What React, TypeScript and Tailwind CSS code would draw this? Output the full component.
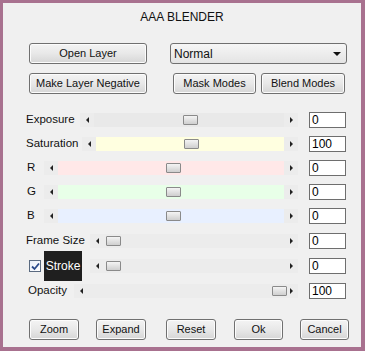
import React from 'react'

const font = { fontFamily: '"Liberation Sans", Arial, sans-serif' }

const Btn = ({ label, className }: { label: string; className: string }) => (
    <div
        className={`flex items-center justify-center h-[21px] rounded-[3px] border border-[#707070] bg-gradient-to-b from-[#f4f4f4] via-[#e8e8e8] to-[#d6d6d6] text-[11px] text-[#111] shadow-[inset_0_0_0_1px_#fcfcfc] ${className}`}
    >
        {label}
    </div>
)

const Thumb = ({ left }: { left: number }) => (
    <div
        className="absolute top-[2px] h-[10px] w-[15px] rounded-[1px] border border-[#8a8a8a] bg-gradient-to-b from-[#f4f4f4] to-[#cfcfcf]"
        style={{ left }}
    />
)

const LeftArrow = () => (
    <div className="flex w-[14px] items-center justify-center">
        <div className="h-0 w-0 border-y-[3px] border-r-[3px] border-y-transparent border-r-[#222]" />
    </div>
)

const RightArrow = () => (
    <div className="flex w-[14px] items-center justify-center">
        <div className="h-0 w-0 border-y-[3px] border-l-[3px] border-y-transparent border-l-[#222]" />
    </div>
)

type SliderProps = {
    lead: React.ReactNode
    leadWidth: string
    track: string
    thumb: number
    value: string
    rowClass?: string
}

const Slider = ({ lead, leadWidth, track, thumb, value, rowClass }: SliderProps) => (
    <div className={`flex items-center h-[24px] ${rowClass || ''}`}>
        <div className={`flex items-center text-[11.5px] ${leadWidth}`}>{lead}</div>
        <div className="flex h-[14px] flex-1 bg-[#ececec]">
            <LeftArrow />
            <div className={`relative flex-1 ${track}`}>
                <Thumb left={thumb} />
            </div>
            <RightArrow />
        </div>
        <div className="ml-[11px] flex h-[16px] w-[37px] items-center border border-[#6e6e6e] bg-white pl-[2px] text-[12px] text-black">
            {value}
        </div>
    </div>
)

export default function App() {
    return (
        <div
            className="flex h-[351px] w-[365px] flex-col border-t-[3px] border-l-[3px] border-r-4 border-b-4 border-[#a8718f] bg-[#f0f0f0] text-[#111]"
            style={font}
        >
            <div className="mt-[7px] text-center text-[12px] leading-[14px]">AAA BLENDER</div>

            <div className="mt-[19px] flex pl-[26px]">
                <Btn label="Open Layer" className="w-[118px]" />
                <div className="ml-[23px] flex h-[21px] w-[177px] items-center justify-between rounded-[3px] border border-[#707070] bg-gradient-to-b from-[#f6f6f6] to-[#e4e4e4] pl-[3px] pr-[5px] text-[12px]">
                    <span>Normal</span>
                    <div className="h-0 w-0 border-x-[4px] border-t-[4px] border-x-transparent border-t-[#111]" />
                </div>
            </div>

            <div className="mt-[9px] flex pl-[26px]">
                <Btn label="Make Layer Negative" className="w-[118px]" />
                <Btn label="Mask Modes" className="ml-[26px] w-[83px]" />
                <Btn label="Blend Modes" className="ml-[5px] w-[84px]" />
            </div>

            <div className="mt-[14px] flex flex-col pl-[23px] pr-[15px] text-[12px]">
                <Slider lead="Exposure" leadWidth="w-[54px]" track="bg-[#e9e9e9]" thumb={89} value="0" />
                <Slider lead="Saturation" leadWidth="w-[56px]" track="bg-[#ffffe0]" thumb={88} value="100" />
                <Slider lead={<span className="pl-[1px]">R</span>} leadWidth="w-[18px]" track="bg-[#ffe8e8]" thumb={108} value="0" />
                <Slider lead={<span className="pl-[1px]">G</span>} leadWidth="w-[18px]" track="bg-[#e8ffe8]" thumb={108} value="0" />
                <Slider lead={<span className="pl-[1px]">B</span>} leadWidth="w-[18px]" track="bg-[#e8f0ff]" thumb={108} value="0" />
                <Slider lead="Frame Size" leadWidth="w-[64px]" track="bg-[#ececec]" thumb={2} value="0" rowClass="mt-[1px]" />
                <Slider
                    lead={
                        <>
                            <div className="ml-[3px] flex h-[12px] w-[12px] items-center justify-center border border-[#5a6a80] bg-gradient-to-br from-[#e8eef8] to-white">
                                <svg width="9" height="9" viewBox="0 0 9 9">
                                    <path d="M1 4.5 L3.5 7 L8 1.5" fill="none" stroke="#2a4a8a" strokeWidth="1.8" />
                                </svg>
                            </div>
                            <div className="ml-[3px] flex h-[30px] w-[38px] items-center justify-center bg-[#1f1f1f] text-[12px] text-white">
                                Stroke
                            </div>
                        </>
                    }
                    leadWidth="w-[64px]"
                    track="bg-[#ececec]"
                    thumb={2}
                    value="0"
                    rowClass="h-[26px]"
                />
                <Slider lead={<span className="pl-[2px]">Opacity</span>} leadWidth="w-[48px]" track="bg-[#ececec]" thumb={184} value="100" />
            </div>

            <div className="mt-[16px] flex pl-[26px]">
                <Btn label="Zoom" className="w-[50px]" />
                <Btn label="Expand" className="ml-[17px] w-[50px]" />
                <Btn label="Reset" className="ml-[20px] w-[50px]" />
                <Btn label="Ok" className="ml-[18px] w-[49px]" />
                <Btn label="Cancel" className="ml-[17px] w-[49px]" />
            </div>
        </div>
    )
}
